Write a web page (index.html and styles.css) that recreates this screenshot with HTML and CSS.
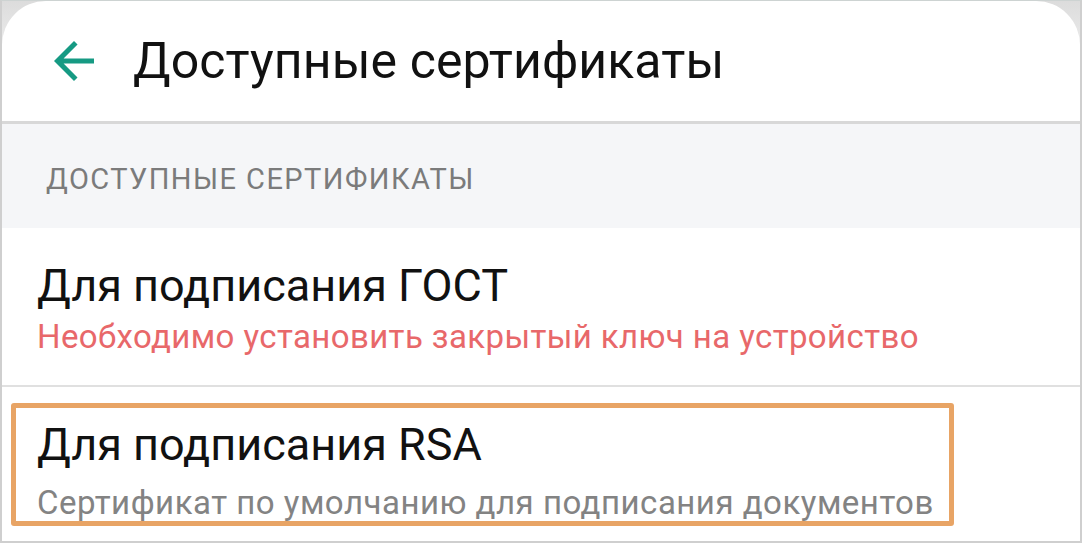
FILE: index.html
```html
<!DOCTYPE html>
<html lang="ru">
<head>
    <meta charset="UTF-8">
    <meta name="viewport" content="width=device-width, initial-scale=1.0">
    <title>Доступные сертификаты</title>
    <link rel="stylesheet" href="styles.css">
</head>
<body>
    <div class="frame">
        <div class="screen">
            <header class="toolbar">
                <svg class="back" viewBox="0 0 24 24" width="60" height="60">
                    <path d="M20 11H7.83l5.59-5.59L12 4l-8 8 8 8 1.41-1.41L7.83 13H20v-2z"/>
                </svg>
                <h1>Доступные сертификаты</h1>
            </header>

            <div class="section">ДОСТУПНЫЕ СЕРТИФИКАТЫ</div>

            <div class="item">
                <div class="item-title">Для подписания ГОСТ</div>
                <div class="item-sub error">Необходимо установить закрытый ключ на устройство</div>
            </div>

            <div class="item last">
                <div class="highlight">
                    <div class="item-title">Для подписания RSA</div>
                    <div class="item-sub">Сертификат по умолчанию для подписания документов</div>
                </div>
            </div>
        </div>
    </div>
</body>
</html>
```

FILE: styles.css
```css
html, body {
    margin: 0;
    padding: 0;
}
body {
    width: 1082px;
    height: 544px;
    overflow: hidden;
    background: #fff;
    font-family: Roboto, "Noto Sans", Arial, sans-serif;
}
.frame {
    box-sizing: border-box;
    width: 1082px;
    height: 543px;
    border: 1px solid #cdd3d2;
    border-left: 2px solid #cfcfcf;
    border-right: 2px solid #cfcfcf;
    border-bottom: 2px solid #cfcfcf;
    background: linear-gradient(180deg, #dcdcdc 0%, #f0f0f0 60px, #fff 80px);
}
.screen {
    height: 100%;
    background: #fff;
    border-radius: 44px 44px 0 0;
    display: flex;
    flex-direction: column;
}
.toolbar {
    height: 120px;
    display: flex;
    align-items: center;
    padding-left: 42px;
    border-bottom: 3px solid #d8d8d8;
}
.back {
    fill: #169a83;
    flex: none;
}
.toolbar h1 {
    margin: 0 0 0 29px;
    font-weight: 400;
    font-size: 50px;
    color: #111;
    letter-spacing: 0.1px;
}
.section {
    height: 104px;
    box-sizing: border-box;
    padding: 5px 0 0 44px;
    background: #f5f6f8;
    display: flex;
    align-items: center;
    font-size: 29px;
    color: #7b7b7b;
    letter-spacing: 1.45px;
}
.item {
    height: 159px;
    box-sizing: border-box;
    padding: 30px 0 0 35px;
    border-bottom: 2px solid #e0e0e0;
}
.item.last {
    border-bottom: none;
    padding: 16px 0 0 9px;
    flex: 1;
}
.highlight {
    width: 912px;
    height: 104px;
    border: 5px solid #e8a465;
    border-radius: 3px;
    padding: 9px 0 0 21px;
}
.item-title {
    font-size: 45px;
    color: #111;
    line-height: 56px;
}
.item-sub {
    font-size: 33px;
    color: #838383;
    line-height: 40px;
    margin-top: 10px;
    letter-spacing: 0.5px;
}
.item-sub.error {
    color: #e8686a;
    margin-top: 3px;
    letter-spacing: 0.4px;
}
```
